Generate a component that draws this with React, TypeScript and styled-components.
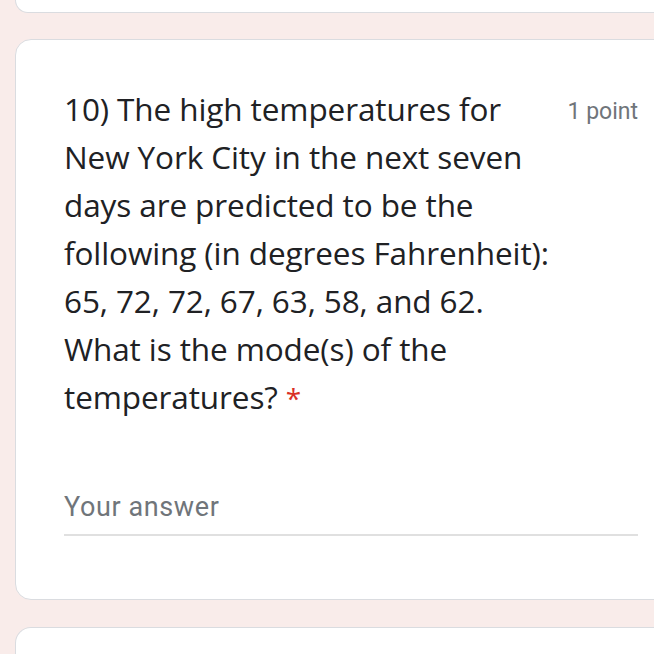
import React from "react";
import styled, { createGlobalStyle } from "styled-components";

const Global = createGlobalStyle`
  html, body { margin: 0; padding: 0; background: #f9ecea; overflow: hidden; }
  body { width: 654px; height: 654px; }
`;

const Page = styled.div`
  display: flex;
  flex-direction: column;
  gap: 26px;
  padding-left: 15px;
  width: 654px;
  height: 654px;
  overflow: hidden;
  box-sizing: border-box;
`;

const Card = styled.div<{ $part?: "tail" | "head" | "full" }>`
  flex: none;
  width: 672px;
  box-sizing: border-box;
  background: #fff;
  border: 1px solid #dadce0;
  border-radius: ${(p) =>
    p.$part === "tail" ? "0 0 16px 16px" : p.$part === "head" ? "16px 16px 0 0" : "16px"};
  ${(p) => (p.$part === "tail" ? "border-top: none; height: 13px;" : "")}
  ${(p) => (p.$part === "head" ? "border-bottom: none; height: 40px; margin-top: 1px;" : "")}
  ${(p) => (p.$part === "full" || !p.$part ? "padding: 45px 48px 63px 48px;" : "")}
`;

const Header = styled.div`
  display: flex;
  align-items: flex-start;
  justify-content: space-between;
  gap: 8px;
`;

const Title = styled.div`
  font-family: "Open Sans", sans-serif;
  font-size: 31.5px;
  line-height: 48px;
  color: #202124;
  white-space: nowrap;
  letter-spacing: -0.1px;
`;

const Star = styled.span`
  color: #d93025;
  margin-left: 8px;
  font-size: 28px;
`;

const Points = styled.div`
  font-family: Roboto, sans-serif;
  font-size: 23px;
  line-height: 48px;
  color: #70757a;
  white-space: nowrap;
  padding-top: 3px;
`;

const Answer = styled.div`
  margin-top: 65px;
  width: 574px;
  font-family: Roboto, sans-serif;
  font-size: 27px;
  line-height: 40px;
  color: #70757a;
  padding-bottom: 7px;
  border-bottom: 2px solid #e0e0e0;
  letter-spacing: 0.6px;
`;

const lines = [
  "10) The high temperatures for",
  "New York City in the next seven",
  "days are predicted to be the",
  "following (in degrees Fahrenheit):",
  "65, 72, 72, 67, 63, 58, and 62.",
  "What is the mode(s) of the",
];

export default function App() {
  return (
    <>
      <Global />
      <Page>
        <Card $part="tail" />
        <Card $part="full">
          <Header>
            <Title>
              {lines.map((l) => (
                <React.Fragment key={l}>
                  {l}
                  <br />
                </React.Fragment>
              ))}
              temperatures?<Star>*</Star>
            </Title>
            <Points>1 point</Points>
          </Header>
          <Answer>Your answer</Answer>
        </Card>
        <Card $part="head" />
      </Page>
    </>
  );
}
